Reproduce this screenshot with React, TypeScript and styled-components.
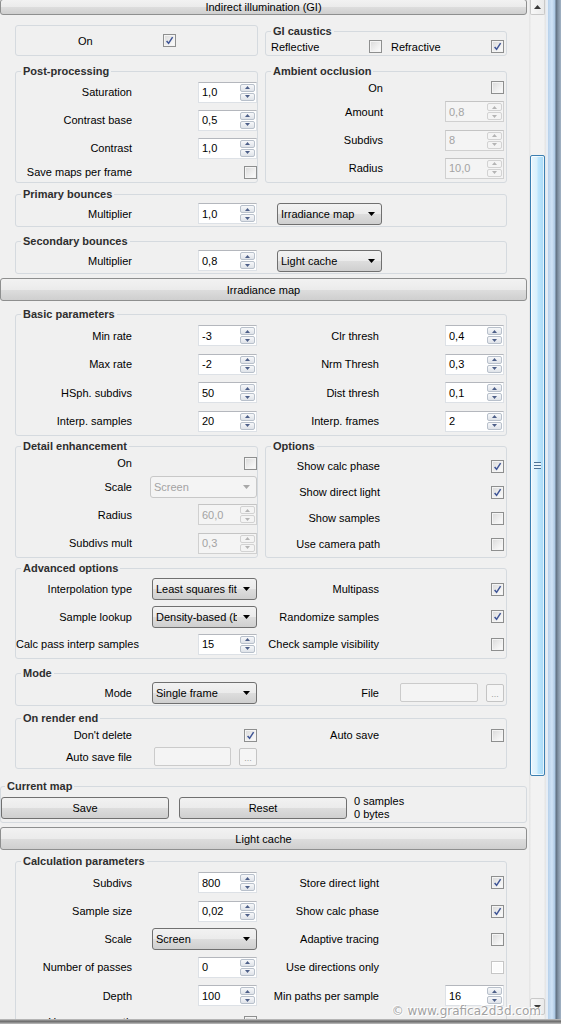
import styled, { createGlobalStyle } from 'styled-components';

const GlobalStyle = createGlobalStyle`
  html, body {
    margin: 0;
    padding: 0;
    background: #f0f0f0;
  }
  body {
    font-family: "Liberation Sans", Arial, sans-serif;
    font-size: 11px;
    color: #000;
    overflow: hidden;
  }
  * {
    box-sizing: border-box;
  }
`;

const FULL = '117px 124px 123px 124px';
const HALF = '117px 124px';
const HALF_R = '118px 120px';

const Window = styled.div`
  position: relative;
  width: 561px;
  height: 1024px;
  overflow: hidden;
  display: flex;
  flex-direction: column;
`;

const Viewport = styled.div`
  flex: 1;
  min-height: 0;
  display: flex;
`;

const Panel = styled.div`
  width: 529px;
  flex: none;
  overflow: hidden;
  display: flex;
  flex-direction: column;
`;

const RolloutHeader = styled.div<{ $cut?: boolean; $mt?: number }>`
  flex: none;
  height: ${(p) => (p.$cut ? 16 : 23)}px;
  margin: ${(p) => (p.$cut ? -1 : p.$mt ?? 4)}px 2px 0 0;
  border: 1px solid #8e8f8f;
  border-radius: 3px;
  background: linear-gradient(#f2f2f2 0%, #ebebeb 50%, #dddddd 51%, #cfcfcf 100%);
  display: flex;
  align-items: center;
  justify-content: center;
`;

const Body = styled.div`
  flex: none;
  padding: 0 22px 0 15px;
  display: flex;
  flex-direction: column;
`;

const Pair = styled.div<{ $mt: number }>`
  display: flex;
  gap: 7px;
  margin-top: ${(p) => p.$mt}px;
  align-items: stretch;

  & > :first-child {
    flex: 0 0 243px;
  }
  & > :last-child {
    flex: 1 1 0;
  }
`;

const Group = styled.fieldset<{ $mt?: number; $pr?: number }>`
  margin: ${(p) => p.$mt ?? 0}px 0 0;
  padding: 0 ${(p) => p.$pr ?? 2}px 0 0;
  min-width: 0;
  border: 1px solid #d5dadf;
  border-radius: 3px;
`;

const CurrentMap = styled(Group)`
  margin: 11px 2px 0 0;
  padding: 0;
`;

const Title = styled.legend<{ $ml?: number }>`
  margin-left: ${(p) => p.$ml ?? 5}px;
  padding: 0 2px;
  font-weight: bold;
  line-height: 13px;
  color: #2e2e2e;
`;

const PlainBox = styled.div`
  border: 1px solid #d5dadf;
  border-radius: 3px;
  display: grid;
  grid-template-columns: 147px 13px;
  align-items: center;
`;

const OnLabel = styled.span`
  padding-left: 62px;
`;

const Row = styled.div<{ $h: number; $cols?: string; $pl?: number }>`
  height: ${(p) => p.$h}px;
  display: grid;
  grid-template-columns: ${(p) => p.$cols ?? FULL};
  align-items: center;
  padding-left: ${(p) => p.$pl ?? 0}px;
`;

const Label = styled.span`
  text-align: right;
  white-space: nowrap;
  padding-right: 1px;
`;

const Text = styled.span`
  white-space: nowrap;
`;

const Ctrl = styled.div<{ $start?: boolean; $pl?: number }>`
  display: flex;
  align-items: center;
  justify-content: ${(p) => (p.$start ? 'flex-start' : 'flex-end')};
  gap: 8px;
  padding-left: ${(p) => p.$pl ?? 0}px;
  min-width: 0;
`;

const SpinBox = styled.div<{ $disabled?: boolean }>`
  width: 59px;
  height: 21px;
  display: flex;
  border: 1px solid ${(p) => (p.$disabled ? '#d0d0d0' : '#dde1e6')};
  border-top-color: ${(p) => (p.$disabled ? '#c4c4c4' : '#b4b7bd')};
  background: ${(p) => (p.$disabled ? '#f4f4f4' : '#fff')};
`;

const SpinValue = styled.div<{ $disabled?: boolean }>`
  flex: 1;
  padding-left: 3px;
  display: flex;
  align-items: center;
  color: ${(p) => (p.$disabled ? '#a3a3a3' : '#000')};
`;

const SpinButtons = styled.div`
  width: 16px;
  display: flex;
  flex-direction: column;
  padding: 1px 1px 1px 0;
  gap: 1px;
`;

const SpinButton = styled.div<{ $disabled?: boolean }>`
  flex: 1;
  border: 1px solid ${(p) => (p.$disabled ? '#d2d2d2' : '#b8c0cb')};
  border-radius: 2px;
  background: ${(p) =>
    p.$disabled ? '#f4f4f4' : 'linear-gradient(#f7f8fa, #dfe3e9)'};
  display: flex;
  align-items: center;
  justify-content: center;
`;

const CheckBox = styled.span<{ $disabled?: boolean }>`
  width: 13px;
  height: 13px;
  border: 1px solid ${(p) => (p.$disabled ? '#c6c6c6' : '#8e8f8f')};
  background: ${(p) =>
    p.$disabled ? '#fbfbfb' : 'linear-gradient(135deg, #d9d9d9, #f0f0f0 60%, #fdfdfd)'};
  box-shadow: inset 0 0 0 1px ${(p) => (p.$disabled ? '#fff' : '#f4f4f4')};
  display: inline-flex;
  align-items: center;
  justify-content: center;
  justify-self: end;
`;

const LeftCheck = styled.div`
  display: flex;
`;

const ComboBox = styled.div<{ $disabled?: boolean; $w?: number }>`
  width: ${(p) => p.$w ?? 105}px;
  height: 22px;
  border: 1px solid ${(p) => (p.$disabled ? '#c8c8c8' : '#707070')};
  border-radius: 3px;
  background: ${(p) =>
    p.$disabled
      ? '#f4f4f4'
      : 'linear-gradient(#f2f2f2 0%, #ebebeb 50%, #dddddd 51%, #cfcfcf 100%)'};
  color: ${(p) => (p.$disabled ? '#a3a3a3' : '#000')};
  display: flex;
  align-items: center;
  padding-left: 3px;
`;

const ComboText = styled.span`
  flex: 1;
  overflow: hidden;
  white-space: nowrap;
`;

const ComboArrow = styled.span`
  width: 19px;
  flex: none;
  display: flex;
  align-items: center;
  justify-content: center;
`;

const TextField = styled.div<{ $w: number }>`
  width: ${(p) => p.$w}px;
  height: 19px;
  border: 1px solid #cbcbcb;
  border-radius: 2px;
  background: #f4f4f4;
`;

const DotsButton = styled.div`
  width: 18px;
  height: 18px;
  border: 1px solid #c4c4c4;
  border-radius: 2px;
  background: #f5f5f5;
  color: #a0a0a0;
  font-size: 9px;
  line-height: 9px;
  display: flex;
  align-items: flex-end;
  justify-content: center;
  padding-bottom: 2px;
`;

const ButtonRow = styled.div`
  height: 29px;
  display: flex;
  align-items: center;
`;

const PushButton = styled.div`
  width: 168px;
  height: 22px;
  margin-right: 10px;
  border: 1px solid #707070;
  border-radius: 3px;
  background: linear-gradient(#f2f2f2 0%, #ebebeb 50%, #dddddd 51%, #cfcfcf 100%);
  display: flex;
  align-items: center;
  justify-content: center;
`;

const MapInfo = styled.div`
  margin-left: -3px;
  line-height: 13px;
  padding-top: 1px;
`;

const ScrollBar = styled.div`
  width: 17px;
  flex: none;
  display: flex;
  flex-direction: column;
  padding: 0 1px 4px;
  background: linear-gradient(to right, #e3e3e3, #f2f2f2 15%, #f2f2f2 85%, #e3e3e3);
`;

const ScrollButton = styled.div<{ $cut?: boolean }>`
  height: ${(p) => (p.$cut ? 15 : 17)}px;
  flex: none;
  border: 1px solid #c9c9c9;
  border-top-width: ${(p) => (p.$cut ? 0 : 1)}px;
  border-radius: ${(p) => (p.$cut ? '0 0 2px 2px' : '2px')};
  background: linear-gradient(to right, #f8f8f8, #eaeaea);
  display: flex;
  align-items: center;
  justify-content: center;
`;

const Thumb = styled.div`
  height: 621px;
  margin-top: 140px;
  flex: none;
  border: 1px solid #3c7fb1;
  border-radius: 2px;
  background: linear-gradient(to right, #eaf6fd, #d9f0fc 45%, #bee6fd 55%, #a7d9f5);
  box-shadow: inset 0 0 0 1px rgba(255, 255, 255, 0.7);
  display: flex;
  align-items: center;
  justify-content: center;
`;

const Grip = styled.div`
  width: 7px;
  height: 7px;
  background: repeating-linear-gradient(#4f7396 0 1px, #e8f4fc 1px 3px);
`;

const Filler = styled.div`
  flex: 1;
`;

const Frame = styled.div`
  flex: 1;
  background: linear-gradient(
    to right,
    #e6edf5 0,
    #e6edf5 2px,
    #b6d0ea 2px,
    #d0e3f6 6px,
    #aac6e2 9px,
    #5d6d7e 10px,
    #7f90a2 12px,
    #a2b3c5 15px
  );
`;

const BottomEdge = styled.div`
  height: 5px;
  flex: none;
  background: linear-gradient(#c9c9c9, #6a6a6a 45%, #8d8d8d 70%, #c2c2c2);
`;

const Watermark = styled.div`
  position: absolute;
  right: 20px;
  bottom: 6px;
  font-family: "DejaVu Sans", Verdana, sans-serif;
  font-size: 12px;
  color: #a2a2a2;
  text-shadow: 0 0 2px #fff, 1px 1px 0 #fff, -1px -1px 0 #fff;
  white-space: nowrap;
`;

const Triangle = ({ up, color, w = 5, h = 3 }: { up?: boolean; color: string; w?: number; h?: number }) => (
  <svg width={w} height={h} viewBox={`0 0 ${w} ${h}`}>
    <path d={up ? `M0 ${h} L${w / 2} 0 L${w} ${h} Z` : `M0 0 L${w} 0 L${w / 2} ${h} Z`} fill={color} />
  </svg>
);

const Spin = ({ value, disabled }: { value: string; disabled?: boolean }) => {
  const arrow = disabled ? '#b4b4b4' : '#4d5f88';
  return (
    <SpinBox $disabled={disabled}>
      <SpinValue $disabled={disabled}>{value}</SpinValue>
      <SpinButtons>
        <SpinButton $disabled={disabled}>
          <Triangle up color={arrow} />
        </SpinButton>
        <SpinButton $disabled={disabled}>
          <Triangle color={arrow} />
        </SpinButton>
      </SpinButtons>
    </SpinBox>
  );
};

const Check = ({ checked, disabled }: { checked?: boolean; disabled?: boolean }) => (
  <CheckBox $disabled={disabled}>
    {checked && (
      <svg width="9" height="9" viewBox="0 0 9 9">
        <path d="M1.6 4.9 L3.6 7.3 L7.6 1.2" fill="none" stroke="#3f5596" strokeWidth="1.5" />
      </svg>
    )}
  </CheckBox>
);

const Select = ({ value, disabled, w }: { value: string; disabled?: boolean; w?: number }) => (
  <ComboBox $disabled={disabled} $w={w}>
    <ComboText>{value}</ComboText>
    <ComboArrow>
      <Triangle color={disabled ? '#a8a8a8' : '#000'} w={7} h={4} />
    </ComboArrow>
  </ComboBox>
);

const Browse = ({ w }: { w: number }) => (
  <Ctrl>
    <TextField $w={w} />
    <DotsButton>...</DotsButton>
  </Ctrl>
);

export default function App() {
  return (
    <>
      <GlobalStyle />
      <Window>
        <Viewport>
          <Panel>
            <RolloutHeader $cut>Indirect illumination (GI)</RolloutHeader>
            <Body>
              <Pair $mt={10}>
                <PlainBox>
                  <OnLabel>On</OnLabel>
                  <Check checked />
                </PlainBox>
                <Group>
                  <Title>GI caustics</Title>
                  <Row $h={17} $cols="98px 22px 100px 13px" $pl={5}>
                    <Text>Reflective</Text>
                    <LeftCheck>
                      <Check />
                    </LeftCheck>
                    <Text>Refractive</Text>
                    <Check checked />
                  </Row>
                </Group>
              </Pair>

              <Pair $mt={9}>
                <Group $pr={0}>
                  <Title>Post-processing</Title>
                  <Row $h={28} $cols={HALF}>
                    <Label>Saturation</Label>
                    <Ctrl><Spin value="1,0" /></Ctrl>
                  </Row>
                  <Row $h={28} $cols={HALF}>
                    <Label>Contrast base</Label>
                    <Ctrl><Spin value="0,5" /></Ctrl>
                  </Row>
                  <Row $h={28} $cols={HALF}>
                    <Label>Contrast</Label>
                    <Ctrl><Spin value="1,0" /></Ctrl>
                  </Row>
                  <Row $h={20} $cols={HALF}>
                    <Label>Save maps per frame</Label>
                    <Check />
                  </Row>
                </Group>
                <Group>
                  <Title>Ambient occlusion</Title>
                  <Row $h={19} $cols={HALF_R}>
                    <Label>On</Label>
                    <Check />
                  </Row>
                  <Row $h={29} $cols={HALF_R}>
                    <Label>Amount</Label>
                    <Ctrl><Spin value="0,8" disabled /></Ctrl>
                  </Row>
                  <Row $h={28} $cols={HALF_R}>
                    <Label>Subdivs</Label>
                    <Ctrl><Spin value="8" disabled /></Ctrl>
                  </Row>
                  <Row $h={28} $cols={HALF_R}>
                    <Label>Radius</Label>
                    <Ctrl><Spin value="10,0" disabled /></Ctrl>
                  </Row>
                </Group>
              </Pair>

              <Group $mt={5}>
                <Title>Primary bounces</Title>
                <Row $h={25} $cols="117px 124px 125px">
                  <Label>Multiplier</Label>
                  <Ctrl><Spin value="1,0" /></Ctrl>
                  <Ctrl $start $pl={20}><Select value="Irradiance map" /></Ctrl>
                </Row>
              </Group>

              <Group $mt={8}>
                <Title>Secondary bounces</Title>
                <Row $h={25} $cols="117px 124px 125px">
                  <Label>Multiplier</Label>
                  <Ctrl><Spin value="0,8" /></Ctrl>
                  <Ctrl $start $pl={20}><Select value="Light cache" /></Ctrl>
                </Row>
              </Group>
            </Body>

            <RolloutHeader>Irradiance map</RolloutHeader>
            <Body>
              <Group $mt={7}>
                <Title>Basic parameters</Title>
                <Row $h={29}>
                  <Label>Min rate</Label>
                  <Ctrl><Spin value="-3" /></Ctrl>
                  <Label>Clr thresh</Label>
                  <Ctrl><Spin value="0,4" /></Ctrl>
                </Row>
                <Row $h={28}>
                  <Label>Max rate</Label>
                  <Ctrl><Spin value="-2" /></Ctrl>
                  <Label>Nrm Thresh</Label>
                  <Ctrl><Spin value="0,3" /></Ctrl>
                </Row>
                <Row $h={29}>
                  <Label>HSph. subdivs</Label>
                  <Ctrl><Spin value="50" /></Ctrl>
                  <Label>Dist thresh</Label>
                  <Ctrl><Spin value="0,1" /></Ctrl>
                </Row>
                <Row $h={28}>
                  <Label>Interp. samples</Label>
                  <Ctrl><Spin value="20" /></Ctrl>
                  <Label>Interp. frames</Label>
                  <Ctrl><Spin value="2" /></Ctrl>
                </Row>
              </Group>

              <Pair $mt={4}>
                <Group $pr={0}>
                  <Title>Detail enhancement</Title>
                  <Row $h={20} $cols={HALF}>
                    <Label>On</Label>
                    <Check />
                  </Row>
                  <Row $h={27} $cols={HALF}>
                    <Label>Scale</Label>
                    <Ctrl><Select value="Screen" disabled w={107} /></Ctrl>
                  </Row>
                  <Row $h={29} $cols={HALF}>
                    <Label>Radius</Label>
                    <Ctrl><Spin value="60,0" disabled /></Ctrl>
                  </Row>
                  <Row $h={28} $cols={HALF}>
                    <Label>Subdivs mult</Label>
                    <Ctrl><Spin value="0,3" disabled /></Ctrl>
                  </Row>
                </Group>
                <Group>
                  <Title>Options</Title>
                  <Row $h={26} $cols="115px 123px">
                    <Label>Show calc phase</Label>
                    <Check checked />
                  </Row>
                  <Row $h={26} $cols="115px 123px">
                    <Label>Show direct light</Label>
                    <Check checked />
                  </Row>
                  <Row $h={26} $cols="115px 123px">
                    <Label>Show samples</Label>
                    <Check />
                  </Row>
                  <Row $h={26} $cols="115px 123px">
                    <Label>Use camera path</Label>
                    <Check />
                  </Row>
                </Group>
              </Pair>

              <Group $mt={4}>
                <Title>Advanced options</Title>
                <Row $h={28}>
                  <Label>Interpolation type</Label>
                  <Ctrl><Select value="Least squares fit (good/smooth)" /></Ctrl>
                  <Label>Multipass</Label>
                  <Check checked />
                </Row>
                <Row $h={27}>
                  <Label>Sample lookup</Label>
                  <Ctrl><Select value="Density-based (best)" /></Ctrl>
                  <Label>Randomize samples</Label>
                  <Check checked />
                </Row>
                <Row $h={28}>
                  <Label>Calc pass interp samples</Label>
                  <Ctrl><Spin value="15" /></Ctrl>
                  <Label>Check sample visibility</Label>
                  <Check />
                </Row>
              </Group>

              <Group $mt={8}>
                <Title>Mode</Title>
                <Row $h={25}>
                  <Label>Mode</Label>
                  <Ctrl><Select value="Single frame" /></Ctrl>
                  <Label>File</Label>
                  <Browse w={78} />
                </Row>
              </Group>

              <Group $mt={6}>
                <Title>On render end</Title>
                <Row $h={20}>
                  <Label>Don't delete</Label>
                  <Check checked />
                  <Label>Auto save</Label>
                  <Check />
                </Row>
                <Row $h={23}>
                  <Label>Auto save file</Label>
                  <Browse w={77} />
                </Row>
              </Group>
            </Body>

            <CurrentMap>
              <Title $ml={4}>Current map</Title>
              <ButtonRow>
                <PushButton>Save</PushButton>
                <PushButton>Reset</PushButton>
                <MapInfo>
                  0 samples
                  <br />
                  0 bytes
                </MapInfo>
              </ButtonRow>
            </CurrentMap>

            <RolloutHeader>Light cache</RolloutHeader>
            <Body>
              <Group $mt={5}>
                <Title>Calculation parameters</Title>
                <Row $h={29}>
                  <Label>Subdivs</Label>
                  <Ctrl><Spin value="800" /></Ctrl>
                  <Label>Store direct light</Label>
                  <Check checked />
                </Row>
                <Row $h={28}>
                  <Label>Sample size</Label>
                  <Ctrl><Spin value="0,02" /></Ctrl>
                  <Label>Show calc phase</Label>
                  <Check checked />
                </Row>
                <Row $h={28}>
                  <Label>Scale</Label>
                  <Ctrl><Select value="Screen" /></Ctrl>
                  <Label>Adaptive tracing</Label>
                  <Check />
                </Row>
                <Row $h={28}>
                  <Label>Number of passes</Label>
                  <Ctrl><Spin value="0" /></Ctrl>
                  <Label>Use directions only</Label>
                  <Check disabled />
                </Row>
                <Row $h={29}>
                  <Label>Depth</Label>
                  <Ctrl><Spin value="100" /></Ctrl>
                  <Label>Min paths per sample</Label>
                  <Ctrl><Spin value="16" /></Ctrl>
                </Row>
                <Row $h={24}>
                  <Label>Use camera path</Label>
                  <Check />
                </Row>
              </Group>
            </Body>
          </Panel>

          <ScrollBar>
            <ScrollButton $cut>
              <Triangle up color="#3a3a3a" w={7} h={4} />
            </ScrollButton>
            <Thumb>
              <Grip />
            </Thumb>
            <Filler />
            <ScrollButton>
              <Triangle color="#3a3a3a" w={7} h={4} />
            </ScrollButton>
          </ScrollBar>
          <Frame />
        </Viewport>
        <BottomEdge />
        <Watermark>© www.grafica2d3d.com</Watermark>
      </Window>
    </>
  );
}
